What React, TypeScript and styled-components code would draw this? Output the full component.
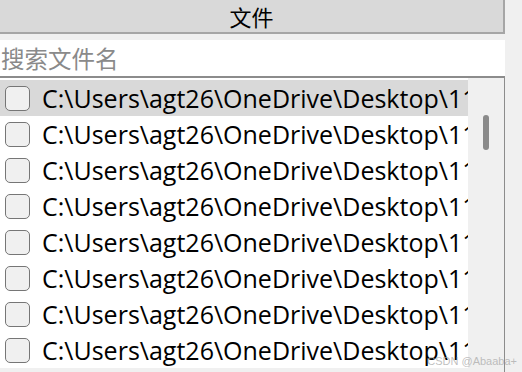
import styled, { createGlobalStyle } from "styled-components";

const GlobalStyle = createGlobalStyle`
  html, body {
    margin: 0;
    padding: 0;
    background: #f0f0f0;
  }
  body {
    font-family: "Open Sans", "Noto Sans CJK SC", sans-serif;
  }
`;

const files = Array.from({ length: 8 }, () => "C:\\Users\\agt26\\OneDrive\\Desktop\\11");

export default function App() {
  return (
    <>
      <GlobalStyle />
      <Page>
        <Panel>
          <Header>文件</Header>
          <SearchInput placeholder="搜索文件名" />
          <ListBox>
            <Rows>
              {files.map((f, i) => (
                <Row key={i} selected={i === 0}>
                  <Check />
                  <PathText>{f}</PathText>
                </Row>
              ))}
            </Rows>
            <ScrollTrack>
              <ScrollThumb />
            </ScrollTrack>
          </ListBox>
        </Panel>
        <Watermark>CSDN @Abaaba+</Watermark>
      </Page>
    </>
  );
}

const Page = styled.div`
  position: relative;
  width: 522px;
  height: 372px;
  overflow: hidden;
  background: #f0f0f0;
`;

const Panel = styled.div`
  width: 505px;
  display: flex;
  flex-direction: column;
`;

const Header = styled.div`
  height: 32px;
  background: #d9d9d9;
  border-bottom: 2px solid #a6a6a6;
  border-right: 2px solid #a6a6a6;
  display: flex;
  align-items: center;
  justify-content: center;
  font-family: "Noto Sans CJK SC", sans-serif;
  font-size: 22px;
  color: #000;
`;

const SearchInput = styled.input`
  margin-top: 6px;
  height: 36px;
  box-sizing: border-box;
  border: none;
  outline: none;
  background: #fff;
  padding: 0 1px;
  font-family: "Noto Sans CJK SC", sans-serif;
  font-size: 23.5px;
  &::placeholder {
    color: #8a8a8a;
  }
`;

const ListBox = styled.div`
  display: flex;
  border-top: 2px solid #8c8c8c;
  border-right: 1px solid #8c8c8c;
  height: 300px;
`;

const Rows = styled.div`
  width: 468px;
  background: #fff;
  padding-top: 2px;
  height: 288px;
  overflow: hidden;
`;

const Row = styled.div<{ selected?: boolean }>`
  height: 36px;
  display: flex;
  align-items: center;
  gap: 12px;
  padding-left: 5px;
  background: ${(p) => (p.selected ? "#d9d9d9" : "transparent")};
  white-space: nowrap;
  overflow: hidden;
`;

const Check = styled.span`
  flex: none;
  width: 25px;
  height: 25px;
  box-sizing: border-box;
  border: 1.5px solid #767676;
  border-radius: 5px;
  background: #f0f0f0;
`;

const PathText = styled.span`
  font-family: "Open Sans", sans-serif;
  font-size: 25px;
  color: #000;
`;

const ScrollTrack = styled.div`
  flex: 1;
  background: #f0f0f0;
  display: flex;
  justify-content: center;
  padding-top: 37px;
`;

const ScrollThumb = styled.div`
  width: 6px;
  height: 35px;
  border-radius: 3px;
  background: #8a8a8a;
`;

const Watermark = styled.div`
  position: absolute;
  right: 5px;
  bottom: 5px;
  font-family: "Liberation Sans", sans-serif;
  font-size: 11px;
  color: rgba(170, 170, 170, 0.75);
`;
